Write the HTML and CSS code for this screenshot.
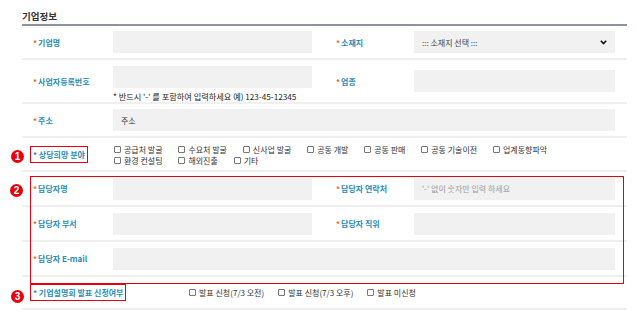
FILE: index.html
```html
<!DOCTYPE html>
<html>
<head>
<meta charset="utf-8">
<link rel="stylesheet" href="styles.css">
</head>
<body>
<div class="page">
  <h2 class="title">기업정보</h2>
  <div class="form">
    <div class="row">
      <div class="th"><span class="req">*</span> 기업명</div>
      <div class="td"><input class="field" type="text"></div>
      <div class="th th2"><span class="req">*</span> 소재지</div>
      <div class="td td2">
        <div class="select-wrap">
          <select class="field select"><option>::: 소재지 선택 :::</option></select>
          <svg class="chev" width="7" height="5" viewBox="0 0 7 5"><path d="M0.8 0.8 L3.5 3.6 L6.2 0.8" fill="none" stroke="#111" stroke-width="1.6"/></svg>
        </div>
      </div>
    </div>
    <div class="row row-tall">
      <div class="th"><span class="req">*</span> 사업자등록번호</div>
      <div class="td td-stack">
        <input class="field" type="text">
        <p class="help">* 반드시 '-' 를 포함하여 입력하세요 예) 123-45-12345</p>
      </div>
      <div class="th th2"><span class="req">*</span> 업종</div>
      <div class="td td2"><input class="field field-wide" type="text"></div>
    </div>
    <div class="row">
      <div class="th"><span class="req">*</span> 주소</div>
      <div class="td td-full"><input class="field field-full" type="text" value="주소"></div>
    </div>
    <div class="row">
      <div class="th"><span class="mark">* 상당희망 분야</span></div>
      <div class="td td-full">
        <div class="checks">
          <label class="check"><span class="box"></span>공급처 발굴</label>
          <label class="check"><span class="box"></span>수요처 발굴</label>
          <label class="check"><span class="box"></span>신사업 발굴</label>
          <label class="check"><span class="box"></span>공동 개발</label>
          <label class="check"><span class="box"></span>공동 판매</label>
          <label class="check"><span class="box"></span>공동 기술이전</label>
          <label class="check"><span class="box"></span>업계동향파악</label>
          <label class="check"><span class="box"></span>환경 컨설팅</label>
          <label class="check"><span class="box"></span>해외진출</label>
          <label class="check"><span class="box"></span>기타</label>
        </div>
      </div>
    </div>
    <div class="row row-b">
      <div class="th"><span class="req">*</span> 담당자명</div>
      <div class="td"><input class="field" type="text"></div>
      <div class="th th2"><span class="req">*</span> 담당자 연락처</div>
      <div class="td td2"><input class="field field-wide" type="text" placeholder="'-' 없이 숫자만 입력 하세요"></div>
    </div>
    <div class="row row-b">
      <div class="th"><span class="req">*</span> 담당자 부서</div>
      <div class="td"><input class="field" type="text"></div>
      <div class="th th2"><span class="req">*</span> 담당자 직위</div>
      <div class="td td2"><input class="field field-wide" type="text"></div>
    </div>
    <div class="row row-b">
      <div class="th"><span class="req">*</span> 담당자 E-mail</div>
      <div class="td td-full"><input class="field field-full" type="text"></div>
    </div>
    <div class="row row-last">
      <div class="th"><span class="mark">* 기업설명회 발표 신청여부</span></div>
      <div class="td td-full td-opts">
        <label class="check"><span class="box"></span>발표 신청(7/3 오전)</label>
        <label class="check"><span class="box"></span>발표 신청(7/3 오후)</label>
        <label class="check"><span class="box"></span>발표 미신청</label>
      </div>
    </div>
  </div>

  <div class="frame"></div>
  <span class="num n1">1</span>
  <span class="num n2">2</span>
  <span class="num n3">3</span>
</div>
</body>
</html>
```

FILE: styles.css
```css
body {
  margin: 0;
  background: #fff;
  font-family: "Noto Sans CJK KR", "Noto Sans", sans-serif;
  font-size: 8px;
  color: #222;
}
.page {
  position: relative;
  padding: 0 10px 0 22px;
  width: 605px;
}
.title {
  margin: 0;
  height: 26px;
  box-sizing: border-box;
  padding-top: 9px;
  font-size: 9.5px;
  font-weight: bold;
  color: #333;
  line-height: 14px;
  border-bottom: 2px solid #8d9599;
}
.form {
  display: grid;
  grid-template-columns: 91px 212px 89px 213px;
}
.row {
  display: contents;
}
.th, .td {
  box-sizing: border-box;
  height: 34px;
  border-bottom: 2px solid #efefef;
  display: flex;
  align-items: center;
}
.row-tall .th, .row-tall .td {
  height: 44px;
}
.row-b .th, .row-b .td {
  height: 35px;
}
.row-last .th, .row-last .td {
  height: 33px;
}
.th {
  padding-left: 11px;
  font-weight: bold;
  color: #2b8cb4;
  white-space: nowrap;
}
.th2 {
  padding-left: 11px;
}
.req {
  color: #f26522;
  margin-right: 1px;
}
.td-full {
  grid-column: 2 / 5;
}
.field {
  box-sizing: border-box;
  width: 199px;
  height: 22px;
  border: 0;
  background: #f1f1f1;
  font-family: inherit;
  font-size: 8px;
  color: #333;
  padding: 0 8px;
  margin: 0;
  outline: none;
}
.field::placeholder {
  color: #9a9a9a;
}
.field-wide {
  width: 201px;
}
.field-full {
  width: 502px;
}
.td-stack {
  flex-direction: column;
  align-items: flex-start;
  justify-content: flex-start;
  padding-top: 6px;
}
.help {
  margin: 3px 0 0;
  font-size: 8.2px;
  line-height: 10px;
  color: #222;
  white-space: nowrap;
}
.select-wrap {
  position: relative;
  width: 201px;
}
.select {
  width: 201px;
  appearance: none;
  -webkit-appearance: none;
  color: #444;
}
.chev {
  position: absolute;
  right: 8px;
  top: 9px;
}
.checks {
  width: 506px;
  line-height: 11px;
  padding-top: 2px;
}
.check {
  display: inline-flex;
  align-items: center;
  margin-right: 13px;
  color: #333;
  white-space: nowrap;
}
.box {
  display: inline-block;
  box-sizing: border-box;
  width: 7px;
  height: 7px;
  border: 1px solid #777;
  border-radius: 1px;
  background: #fff;
  margin: 0 3px 0 1px;
}
.td-opts {
  padding-left: 75px;
}
.mark {
  outline: 1px solid #e8000b;
  outline-offset: 2px;
  color: #2b8cb4;
}
.mark::first-letter {
  color: #f26522;
}
.frame {
  position: absolute;
  left: 30px;
  top: 176px;
  width: 594px;
  height: 108px;
  box-sizing: border-box;
  border: 1px solid #e8000b;
  pointer-events: none;
}
.num {
  position: absolute;
  width: 13px;
  height: 13px;
  border-radius: 50%;
  background: #e8000b;
  color: #fff;
  font-family: "Liberation Sans", sans-serif;
  font-weight: bold;
  font-size: 10px;
  line-height: 13px;
  text-align: center;
}
.n1 { left: 11px; top: 150px; }
.n2 { left: 10px; top: 184px; }
.n3 { left: 11px; top: 290px; }
```
